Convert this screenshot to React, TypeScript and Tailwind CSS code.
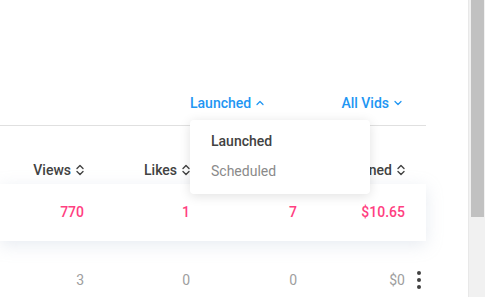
import { ChevronDown, ChevronUp } from "lucide-react";

function SortIcon() {
  return (
    <svg width="8" height="12" viewBox="0 0 8 12" fill="none" className="ml-[5px]">
      <path d="M1 4.5 L4 1.5 L7 4.5" stroke="#424242" strokeWidth="1.4" strokeLinecap="round" strokeLinejoin="round" />
      <path d="M1 7.5 L4 10.5 L7 7.5" stroke="#424242" strokeWidth="1.4" strokeLinecap="round" strokeLinejoin="round" />
    </svg>
  );
}

const colW = ["w-[84px]", "w-[106px]", "w-[107px]", "w-[108px]"];

function HeaderCell({ label, i }: { label: string; i: number }) {
  return (
    <div className={`${colW[i]} flex items-center justify-end`}>
      <span className="text-[14px] font-medium text-[#424242]">{label}</span>
      <SortIcon />
    </div>
  );
}

export default function App() {
  return (
    <div
      className="flex w-[485px] h-[297px] overflow-hidden bg-white"
      style={{ fontFamily: "Roboto, 'Liberation Sans', sans-serif" }}
    >
      <div className="relative w-[468px] h-full">
        <div className="h-[90px]" />

        {/* filters */}
        <div className="w-[426px] h-[26px] flex items-center text-[14px] font-medium text-[#2196f3]">
          <div className="w-[190px]" />
          <button className="flex items-center gap-[3px]">
            Launched <ChevronUp size={12} strokeWidth={2.5} />
          </button>
          <div className="flex-1" />
          <button className="flex items-center gap-[3px] mr-[22px]">
            All Vids <ChevronDown size={12} strokeWidth={2.5} />
          </button>
        </div>

        <div className="w-[426px] h-[10px] border-b border-[#e0e0e0]" />

        {/* column headers */}
        <div className="w-[426px] h-[58px] flex items-center pt-[30px]">
          <HeaderCell label="Views" i={0} />
          <HeaderCell label="Likes" i={1} />
          <HeaderCell label="Shares" i={2} />
          <HeaderCell label="Earned" i={3} />
        </div>

        {/* highlighted row */}
        <div className="w-[426px] h-[57px] flex items-center bg-white shadow-[0_4px_16px_rgba(160,175,200,0.25)] text-[14px] font-medium text-[#ff4081]">
          <div className={`${colW[0]} text-right`}>770</div>
          <div className={`${colW[1]} text-right`}>1</div>
          <div className={`${colW[2]} text-right`}>7</div>
          <div className={`${colW[3]} text-right`}>$10.65</div>
        </div>

        {/* regular row */}
        <div className="w-[426px] h-[74px] flex items-center pt-[4px] text-[14px] text-[#9e9e9e]">
          <div className={`${colW[0]} text-right`}>3</div>
          <div className={`${colW[1]} text-right`}>0</div>
          <div className={`${colW[2]} text-right`}>0</div>
          <div className={`${colW[3]} text-right`}>$0</div>
          <div className="flex flex-col gap-[3px] ml-[12px]">
            <span className="w-[4px] h-[4px] rounded-full bg-[#424242]" />
            <span className="w-[4px] h-[4px] rounded-full bg-[#424242]" />
            <span className="w-[4px] h-[4px] rounded-full bg-[#424242]" />
          </div>
        </div>

        {/* dropdown menu */}
        <div className="absolute left-[190px] top-[120px] w-[180px] h-[74px] bg-white rounded-[4px] shadow-[0_2px_12px_rgba(0,0,0,0.12)] flex flex-col justify-center pl-[21px] pb-[2px] text-[14px]">
          <div className="h-[30px] flex items-center font-medium text-[#424242]">Launched</div>
          <div className="h-[30px] flex items-center text-[#8a8a8a]">Scheduled</div>
        </div>
      </div>

      {/* scrollbar */}
      <div className="w-[17px] h-full bg-[#f1f1f1] border-l border-[#e8e8e8]">
        <div className="ml-[2px] w-[13px] h-[217px] bg-[#c1c1c1]" />
      </div>
    </div>
  );
}
